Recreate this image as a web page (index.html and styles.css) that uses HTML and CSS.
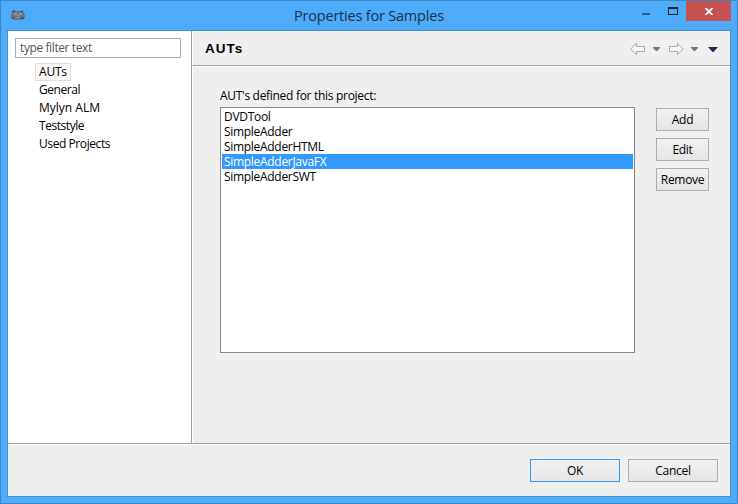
FILE: index.html
```html
<!DOCTYPE html>
<html lang="en">
<head>
<meta charset="utf-8">
<title>Properties for Samples</title>
<link rel="stylesheet" href="styles.css">
</head>
<body>
<div class="window">
  <header class="titlebar">
    <svg class="app-icon" width="16" height="12" viewBox="0 0 16 12">
      <path d="M2 1h3l1 1h4l3-1 1 3 1 3v2l-1 1-3 1H4L2 10 1 9V6l1-2z" fill="#5f7788"/>
      <path d="M2 2h3v1H2zM10 2h3v1h-3zM2 8h2v2H2zM11 8h3v2h-3z" fill="#465865"/>
      <path d="M4 4h3v2H4zM9 4h3v2H9z" fill="#97958f"/>
      <path d="M5 4h1v2H5zM10 4h1v2h-1z" fill="#c9844f"/>
      <path d="M7 6h2v1H7zM6 8h4v1H6z" fill="#8c9ba5"/>
    </svg>
    <h1 class="title">Properties for Samples</h1>
    <div class="controls">
      <svg class="minimize" width="8" height="2"><path d="M0 0h8v2H0z" fill="#315f88"/></svg>
      <svg class="maximize" width="10" height="8"><path d="M0 0h10v8H0zM1 2v5h8V2z" fill="#1d252d" fill-rule="evenodd"/></svg>
      <span class="close"><svg width="8" height="7" viewBox="0 0 8 7"><path d="M.5 0L7.5 7M7.5 0L.5 7" stroke="#fff" stroke-width="1.8"/></svg></span>
    </div>
  </header>
  <main class="client">
    <div class="body">
      <aside class="sidebar">
        <div class="filter"><span>type filter text</span></div>
        <ul class="tree">
          <li class="current"><span>AUTs</span></li>
          <li><span>General</span></li>
          <li class="wide"><span>Mylyn ALM</span></li>
          <li><span>Teststyle</span></li>
          <li class="narrow"><span>Used Projects</span></li>
        </ul>
      </aside>
      <section class="page">
        <div class="page-header">
          <h2>AUTs</h2>
          <svg width="90" height="14" viewBox="0 0 90 14">
            <g fill="#fafafa" stroke="#a9a9a9" stroke-linejoin="round">
              <path d="M.5 7L6.500 1.500V4.500H14.500V9.500H6.500V12.500Z"/>
              <path d="M53 7L47.500 1.500V4.500H39.500V9.500H47.500V12.500Z"/>
            </g>
            <path d="M23 5h7v1L27 9h-1L23 6zM61 5h7v1L65 9h-1L61 6z" fill="#77747b"/>
            <path d="M78 5h10L83.500 10h-1z" fill="#33204f"/>
          </svg>
        </div>
        <div class="content">
          <div class="list-column">
            <p class="caption"><span>AUT's defined for this project:</span></p>
            <ul class="list">
              <li>DVDTool</li>
              <li>SimpleAdder</li>
              <li>SimpleAdderHTML</li>
              <li class="selected">SimpleAdderJavaFX</li>
              <li>SimpleAdderSWT</li>
            </ul>
          </div>
          <div class="actions">
            <button>Add</button>
            <button>Edit</button>
            <button>Remove</button>
          </div>
        </div>
      </section>
    </div>
    <footer class="footer">
      <button class="default">OK</button>
      <button>Cancel</button>
    </footer>
  </main>
</div>
</body>
</html>
```
FILE: styles.css
```css
* { box-sizing: border-box; }
body { margin: 0; font: 12px "Open Sans", "Noto Sans", sans-serif; letter-spacing: -0.3px; color: #000; }
h1, h2, p, ul { margin: 0; padding: 0; font-weight: 400; }
ul { list-style: none; }
svg { display: block; flex: none; }

.window { width: 738px; height: 504px; background: #4dabfa; border: 1px solid #3e86c4; padding: 0 6px; }
.titlebar { height: 29px; display: flex; }
.app-icon { margin: 8px 0 0 3px; }
.title { flex: 1; padding-left: 268px; font-size: 14.5px; line-height: 29px; letter-spacing: -0.2px; color: #16324b; white-space: nowrap; }
.controls { display: flex; }
.minimize { margin: 12px 18px 0 0; }
.maximize { margin: 6px 8px 0 0; }
.close { width: 45px; height: 20px; background: #c75050; display: flex; align-items: center; justify-content: center; }

.client { width: 724px; height: 467px; border: 1px solid #3f8fd2; background: #efefef; }
.body { height: 414px; display: flex; border-bottom: 1px solid #fff; box-shadow: inset 0 -1px #a0a0a0; }
.sidebar { width: 183px; height: 412px; background: #fff; padding: 7px; }
.filter { width: 166px; height: 20px; border: 1px solid #ababb3; padding-left: 4px; line-height: 18px; letter-spacing: -0.4px; color: #555; }
.tree { padding: 5px 0 0 20px; }
.tree li { height: 18px; line-height: 16px; width: max-content; border: 1px solid transparent; padding: 0 3px; letter-spacing: -0.45px; white-space: nowrap; }
.tree .current { background: #f7f7f7; border-color: #dedede; letter-spacing: -0.2px; }
.tree .wide { letter-spacing: 0; }
.tree .narrow { letter-spacing: -0.42px; }

.page { flex: 1; height: 412px; border-left: 1px solid #a0a0a0; box-shadow: inset 1px 0 #fff; }
.page-header { height: 36px; margin-left: 1px; padding: 0 10px 0 12px; display: flex; align-items: center; justify-content: space-between; border-bottom: 1px solid #fff; box-shadow: inset 0 -1px #a0a0a0; }
.page-header h2 { font: 700 13.5px "Liberation Sans", sans-serif; letter-spacing: 1px; }
.content { display: flex; gap: 21px; padding: 20px 0 0 28px; }
.list-column { width: 415px; }
.caption { height: 20px; line-height: 17px; }
.list { height: 246px; border: 1px solid #828790; background: #fff; padding: 1px; }
.list li { height: 15px; line-height: 15px; padding-left: 2px; }
.list .selected { background: #3399ff; color: #fff; }
.actions { padding-top: 21px; display: flex; flex-direction: column; gap: 7px; }
button { width: 53px; height: 23px; padding: 0; border: 1px solid #acacac; background: linear-gradient(#f0f0f0, #e5e5e5); font: inherit; letter-spacing: inherit; color: #000; line-height: 21px; }

.footer { display: flex; justify-content: flex-end; gap: 8px; padding: 14px 12px 0 0; }
.footer button { width: 90px; height: 23px; }
.footer .default { border-color: #3399ff; }
```
